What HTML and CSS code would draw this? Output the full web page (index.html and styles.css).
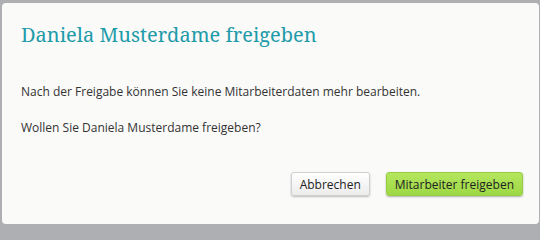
FILE: index.html
```html
<!DOCTYPE html>
<html lang="de">
<head>
<meta charset="utf-8">
<title>Freigeben</title>
<link rel="stylesheet" href="styles.css">
</head>
<body>
<div class="overlay">
  <div class="dialog">
    <h1 class="title">Daniela Musterdame freigeben</h1>
    <div class="body">
      <p>Nach der Freigabe können Sie keine Mitarbeiterdaten mehr bearbeiten.</p>
      <p>Wollen Sie Daniela Musterdame freigeben?</p>
    </div>
    <div class="actions">
      <button class="btn btn-default">Abbrechen</button>
      <button class="btn btn-primary">Mitarbeiter freigeben</button>
    </div>
  </div>
</div>
</body>
</html>
```
FILE: styles.css
```css
html, body {
  margin: 0;
  padding: 0;
  background: #aeafb2;
}
.overlay {
  width: 540px;
  height: 227px;
  padding: 3px 1px 3px 2px;
  box-sizing: border-box;
  display: flex;
}
.dialog {
  flex: 1;
  background: #fafaf9;
  border-radius: 4px;
  display: flex;
  flex-direction: column;
  padding: 0 16px 28px 19px;
  font-family: "Open Sans", "Noto Sans", sans-serif;
  color: #333;
}
.title {
  margin: 17px 0 0 0;
  font-family: "Noto Serif", "DejaVu Serif", "Liberation Serif", serif;
  font-weight: normal;
  font-size: 20px;
  line-height: 30px;
  color: #1f9ba9;
}
.body {
  margin-top: 34px;
  font-size: 12px;
  line-height: 16px;
}
.body p {
  margin: 0 0 20px 0;
}
.actions {
  display: flex;
  justify-content: flex-end;
  gap: 16px;
  margin-top: auto;
}
.btn {
  height: 24px;
  font-family: "Open Sans", "Noto Sans", sans-serif;
  font-size: 12px;
  color: #222;
  border-radius: 3px;
  padding: 0 8px;
  cursor: pointer;
}
.btn-default {
  background: linear-gradient(#ffffff, #ececec);
  border: 1px solid #d0d0d0;
  box-shadow: 0 1px 2px rgba(0,0,0,0.25);
}
.btn-primary {
  background: linear-gradient(#b4e65e, #9ed845);
  border: 1px solid #96cd40;
  box-shadow: 0 1px 2px rgba(0,0,0,0.3);
}
```
